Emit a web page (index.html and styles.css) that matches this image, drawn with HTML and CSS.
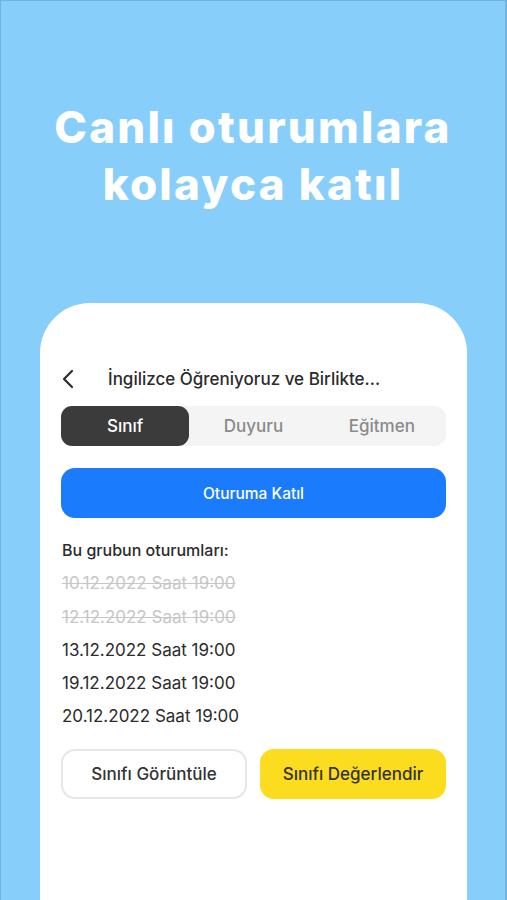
FILE: index.html
```html
<!DOCTYPE html>
<html lang="tr">
<head>
    <meta charset="UTF-8">
    <meta name="viewport" content="width=device-width, initial-scale=1.0">
    <title>Canlı oturumlara kolayca katıl</title>
    <link rel="stylesheet" href="styles.css">
</head>
<body>
    <div class="screen">
        <h1 class="headline">Canlı oturumlara<br>kolayca katıl</h1>

        <div class="card">
            <div class="topbar">
                <svg class="back" width="12" height="20" viewBox="0 0 12 20">
                    <path d="M10 2 L2 10 L10 18" fill="none" stroke="#2b2b2b" stroke-width="2.2" stroke-linecap="round" stroke-linejoin="round"/>
                </svg>
                <span class="title">İngilizce Öğreniyoruz ve Birlikte...</span>
            </div>

            <div class="tabs">
                <div class="tab active">Sınıf</div>
                <div class="tab">Duyuru</div>
                <div class="tab">Eğitmen</div>
            </div>

            <button class="join">Oturuma Katıl</button>

            <div class="sessions">
                <div class="sessions-title">Bu grubun oturumları:</div>
                <div class="session past">10.12.2022 Saat 19:00</div>
                <div class="session past">12.12.2022 Saat 19:00</div>
                <div class="session">13.12.2022 Saat 19:00</div>
                <div class="session">19.12.2022 Saat 19:00</div>
                <div class="session">20.12.2022 Saat 19:00</div>
            </div>

            <div class="actions">
                <button class="btn outline">Sınıfı Görüntüle</button>
                <button class="btn yellow">Sınıfı Değerlendir</button>
            </div>
        </div>
    </div>
</body>
</html>
```

FILE: styles.css
```css
body {
    margin: 0;
    background-color: #87cefa;
    font-family: Inter, "Open Sans", sans-serif;
    color: #2b2b2b;
}
.screen {
    height: 900px;
    box-sizing: border-box;
    border-top: 1px solid #74b3db;
    border-left: 1px solid #74b3db;
    border-right: 2px solid #74b3db;
    overflow: hidden;
    display: flex;
    flex-direction: column;
}
.headline {
    margin: 98px 0 0 0;
    text-align: center;
    color: white;
    font-family: Inter, sans-serif;
    font-weight: 800;
    font-size: 44px;
    line-height: 57px;
    letter-spacing: 2.2px;
}
.card {
    flex: 1;
    margin: 90px 38px 0 39px;
    background: white;
    border-radius: 50px 50px 0 0;
    padding: 64px 21px 0 21px;
}
.topbar {
    display: flex;
    align-items: center;
    height: 24px;
}
.back {
    margin-left: 1px;
}
.title {
    margin-left: 34px;
    font-size: 17px;
    font-weight: 500;
    color: #2b2b2b;
}
.tabs {
    margin-top: 15px;
    height: 40px;
    display: grid;
    grid-template-columns: 1fr 1fr 1fr;
    background: #f4f4f4;
    border-radius: 12px;
}
.tab {
    display: flex;
    align-items: center;
    justify-content: center;
    font-size: 17px;
    font-weight: 500;
    color: #8a8a8a;
    border-radius: 11px;
}
.tab.active {
    background: #3b3b3b;
    color: white;
}
.join {
    display: block;
    width: 100%;
    height: 50px;
    margin-top: 22px;
    border: none;
    border-radius: 14px;
    background: #1b7bfd;
    color: white;
    font-family: inherit;
    font-size: 15.5px;
    font-weight: 500;
}
.sessions {
    margin-top: 16px;
    margin-left: 1px;
}
.sessions-title {
    font-size: 16px;
    font-weight: 500;
    line-height: 33.3px;
    color: #2b2b2b;
}
.session {
    font-size: 17px;
    line-height: 33.3px;
    color: #2b2b2b;
}
.session.past {
    color: #c6c6c6;
    text-decoration: line-through;
}
.actions {
    margin-top: 15px;
    display: grid;
    grid-template-columns: 1fr 1fr;
    gap: 13px;
}
.btn {
    height: 50px;
    border-radius: 14px;
    font-family: inherit;
    font-size: 17px;
    font-weight: 500;
    color: #333;
}
.btn.outline {
    background: white;
    border: 2px solid #e6e6e6;
}
.btn.yellow {
    background: #fcdc1e;
    border: 2px solid #fcdc1e;
}
```
